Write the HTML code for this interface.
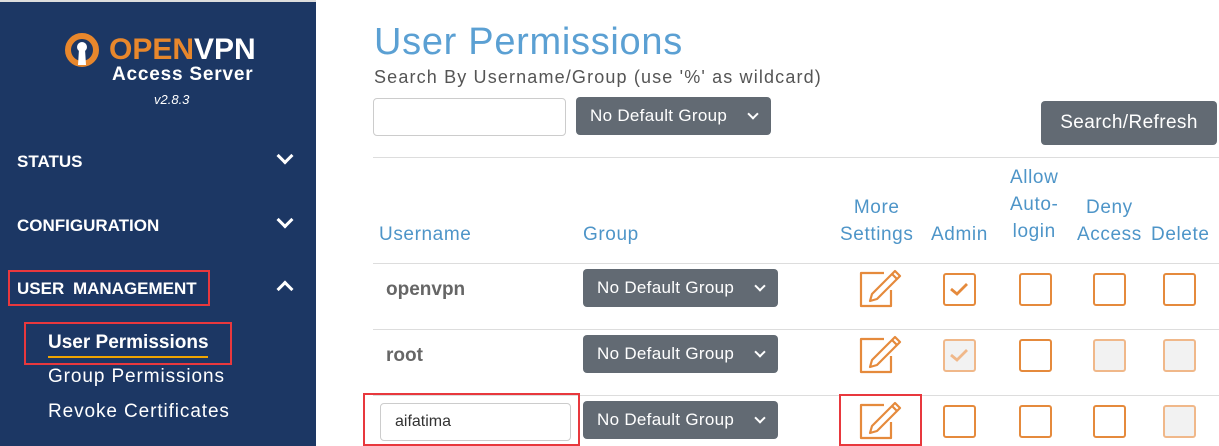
<!DOCTYPE html>
<html><head><style>
*{margin:0;padding:0;box-sizing:border-box}
body{width:1219px;height:446px;overflow:hidden;background:#fff;font-family:"Liberation Sans",sans-serif;position:relative}
.sb{position:absolute;left:0;top:0;width:316px;height:446px;background:#1c3764;border-top:2px solid #ddd}
.a{position:absolute;white-space:nowrap}
.w{color:#fff;font-weight:bold}
.hd{color:#4e95c8;font-size:19px;text-align:center;line-height:27px;letter-spacing:0.6px}
.line{position:absolute;left:373px;right:0;height:1px;background:#ddd}
.sel{position:absolute;background:#626a73;color:#fff;border-radius:4px;font-size:17px;padding-left:14px;line-height:38px;height:38px;letter-spacing:0.3px}
.sel:after{content:"";position:absolute;right:14px;top:13px;width:6px;height:6px;border-right:2px solid #fff;border-bottom:2px solid #fff;transform:rotate(45deg)}
.cb{position:absolute;width:33px;height:33px;border:2px solid #e58a3c;border-radius:3px}
.cb.d{border-color:#f0b88a;background:#f2f2f2}
.chev{position:absolute;width:12px;height:12px;border-right:3px solid #fff;border-bottom:3px solid #fff}
.red{position:absolute;border:2px solid #e8383d}
</style></head><body>
<div class="sb">
<svg class="a" style="left:64px;top:30px" width="36" height="36" viewBox="0 0 36 36"><circle cx="18" cy="18" r="14" fill="none" stroke="#e8872c" stroke-width="6"/><circle cx="18" cy="15" r="5" fill="#fff"/><path d="M15 17 L14 33 L22 33 L21 17Z" fill="#fff"/></svg>
<div class="a" style="left:109px;top:31px;font-size:30px;font-weight:bold;letter-spacing:0px"><span style="color:#e8872c">OPEN</span><span style="color:#fff">VPN</span></div>
<div class="a w" style="left:112px;top:62px;font-size:19px;letter-spacing:0.8px">Access Server</div>
<div class="a" style="left:154px;top:90px;font-size:13px;color:#fff;font-style:italic">v2.8.3</div>
<div class="a w" style="left:17px;top:150px;font-size:17px">STATUS</div>
<div class="chev" style="left:279px;top:148px;transform:rotate(45deg)"></div>
<div class="a w" style="left:17px;top:214px;font-size:17px">CONFIGURATION</div>
<div class="chev" style="left:279px;top:212px;transform:rotate(45deg)"></div>
<div class="a w" style="left:17px;top:277px;font-size:17px;word-spacing:4px">USER MANAGEMENT</div>
<div class="chev" style="left:279px;top:281px;transform:rotate(225deg)"></div>
<div class="red" style="left:8px;top:268px;width:202px;height:36px"></div>
<div class="a w" style="left:48px;top:330px;font-size:19px">User Permissions</div>
<div class="a" style="left:48px;top:354px;width:160px;height:2px;background:#f0a500"></div>
<div class="red" style="left:24px;top:320px;width:208px;height:43px"></div>
<div class="a" style="left:48px;top:364px;font-size:19px;color:#fff;letter-spacing:0.9px">Group Permissions</div>
<div class="a" style="left:48px;top:399px;font-size:19px;color:#fff;letter-spacing:0.9px">Revoke Certificates</div>
</div>
<div class="a" style="left:374px;top:21px;font-size:38px;color:#5ba0d3;letter-spacing:0.7px">User Permissions</div>
<div class="a" style="left:374px;top:67px;font-size:18px;color:#555;letter-spacing:1.15px">Search By Username/Group (use '%' as wildcard)</div>
<div class="a" style="left:373px;top:98px;width:193px;height:38px;border:1px solid #ccc;border-radius:4px"></div>
<div class="sel" style="left:576px;top:97px;width:195px">No Default Group</div>
<div class="a" style="left:1041px;top:101px;width:176px;height:44px;background:#626a73;border-radius:4px;color:#fff;font-size:19px;text-align:center;line-height:44px;letter-spacing:0.4px">Search/Refresh</div>
<div class="line" style="top:157px"></div>
<div class="a hd" style="left:379px;top:221px">Username</div>
<div class="a hd" style="left:583px;top:221px">Group</div>
<div class="a hd" style="left:840px;top:194px">More<br>Settings</div>
<div class="a hd" style="left:931px;top:221px">Admin</div>
<div class="a hd" style="left:1010px;top:164px">Allow<br>Auto-<br>login</div>
<div class="a hd" style="left:1077px;top:194px">Deny<br>Access</div>
<div class="a hd" style="left:1151px;top:221px">Delete</div>
<div class="line" style="top:263px"></div>
<div class="line" style="top:329px"></div>
<div class="line" style="top:395px"></div>
<div class="a" style="left:386px;top:279px;font-size:19px;color:#666;font-weight:bold">openvpn</div>
<div class="a" style="left:386px;top:345px;font-size:19px;color:#666;font-weight:bold">root</div>
<div class="a" style="left:380px;top:403px;width:191px;height:38px;border:1px solid #ccc;border-radius:4px;font-size:16px;color:#333;padding-left:14px;line-height:36px">aifatima</div>
<div class="red" style="left:363px;top:393px;width:217px;height:53px"></div>
<div class="sel" style="left:583px;top:269px;width:195px">No Default Group</div>
<div class="sel" style="left:583px;top:335px;width:195px">No Default Group</div>
<div class="sel" style="left:583px;top:401px;width:195px">No Default Group</div>
<svg class="a" style="left:858px;top:268px" width="46" height="40" viewBox="0 0 46 40"><g fill="none" stroke="#e58a3c" stroke-width="2.2" stroke-linejoin="round"><path d="M26 5H3V38H33V22"/><path d="M37 3L42 8L19 31L12 33L14 26Z"/><path d="M34 6L39 11"/></g></svg>
<svg class="a" style="left:858px;top:334px" width="46" height="40" viewBox="0 0 46 40"><g fill="none" stroke="#e58a3c" stroke-width="2.2" stroke-linejoin="round"><path d="M26 5H3V38H33V22"/><path d="M37 3L42 8L19 31L12 33L14 26Z"/><path d="M34 6L39 11"/></g></svg>
<svg class="a" style="left:858px;top:400px" width="46" height="40" viewBox="0 0 46 40"><g fill="none" stroke="#e58a3c" stroke-width="2.2" stroke-linejoin="round"><path d="M26 5H3V38H33V22"/><path d="M37 3L42 8L19 31L12 33L14 26Z"/><path d="M34 6L39 11"/></g></svg>
<div class="red" style="left:839px;top:394px;width:83px;height:52px"></div>
<div class="cb" style="left:943px;top:273px"><svg width="29" height="29"><path d="M6 14L12 19L22 9" fill="none" stroke="#e58a3c" stroke-width="2.8"/></svg></div>
<div class="cb" style="left:1019px;top:273px"></div>
<div class="cb" style="left:1093px;top:273px"></div>
<div class="cb" style="left:1163px;top:273px"></div>
<div class="cb d" style="left:943px;top:339px"><svg width="29" height="29"><path d="M6 14L12 19L22 9" fill="none" stroke="#f0b88a" stroke-width="2.8"/></svg></div>
<div class="cb" style="left:1019px;top:339px"></div>
<div class="cb d" style="left:1093px;top:339px"></div>
<div class="cb d" style="left:1163px;top:339px"></div>
<div class="cb" style="left:943px;top:405px"></div>
<div class="cb" style="left:1019px;top:405px"></div>
<div class="cb" style="left:1093px;top:405px"></div>
<div class="cb d" style="left:1163px;top:405px"></div>
</body></html>
